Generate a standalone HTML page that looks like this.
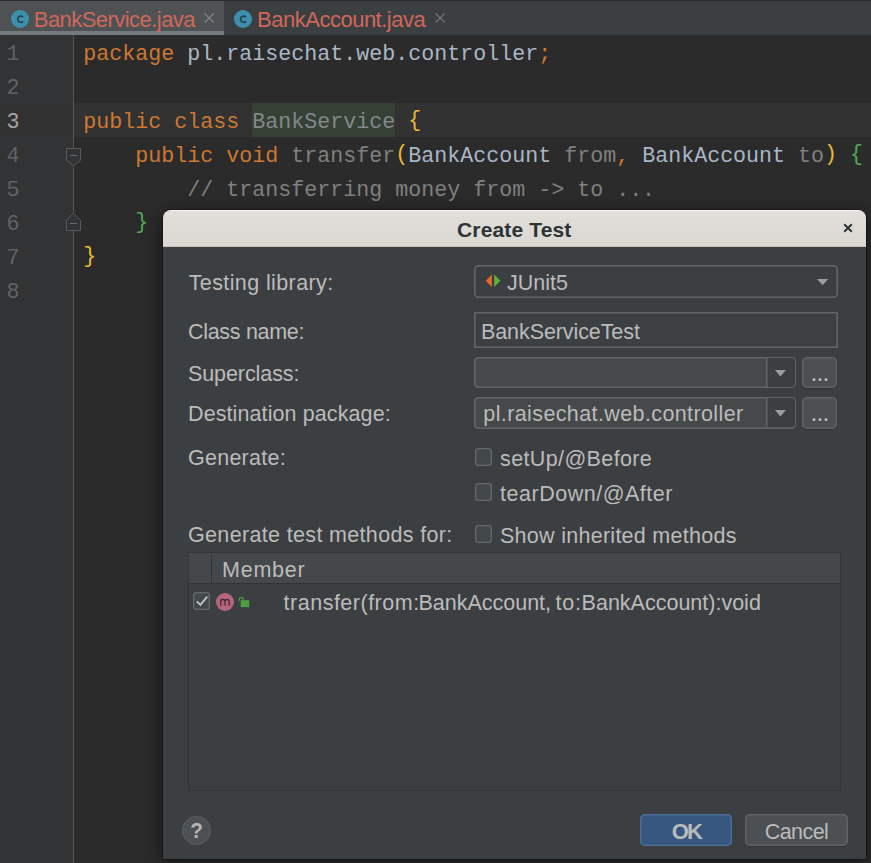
<!DOCTYPE html>
<html>
<head>
<meta charset="utf-8">
<title>Create Test</title>
<style>
*{box-sizing:border-box;margin:0;padding:0}
html,body{width:871px;height:863px;overflow:hidden;background:#2b2b2b}
body{position:relative;font-family:"Liberation Sans",sans-serif;color:#bbbbbb}
.abs{position:absolute}
/* ---------- tab bar ---------- */
#tabbar{left:0;top:0;width:871px;height:35px;background:#3c3f41;border-top:1px solid #2b2b2b}
#tab1{left:0;top:1px;width:224px;height:30px;background:#4e5254}
#tab1u{left:0;top:31px;width:224px;height:4px;background:#747a80}
.tabtxt{top:7px;font-size:22px;line-height:26px;color:#d1675a;white-space:pre}
.tabx{font-size:0}
/* ---------- editor ---------- */
#gutter{left:0;top:35px;width:73px;height:828px;background:#313335}
#gutline{left:73px;top:35px;width:1px;height:828px;background:#555555}
#curline{left:74px;top:103px;width:797px;height:34px;background:#323232}
.ln{left:6.500px;width:30px;height:34px;line-height:34px;font-family:"Liberation Mono",monospace;font-size:21.67px;color:#606366;white-space:pre}
.code{left:83.300px;height:34px;line-height:34px;font-family:"Liberation Mono",monospace;font-size:21.67px;color:#a9b7c6;white-space:pre}
.k{color:#cc7832}.g{color:#808080}.y{color:#e8ba36;position:relative;top:-2.300px}.gr{color:#54a857;position:relative;top:-2.300px}.u{color:#83878b}
#hl{left:252px;top:103px;width:143.300px;height:34px;background:#344134}
/* ---------- dialog ---------- */
#shadow{left:163px;top:210px;width:703px;height:649px;border-radius:8px 8px 0 0;box-shadow:0 4px 18px 1px rgba(0,0,0,.5),0 0 0 1px rgba(0,0,0,.32)}
#dlg{left:163px;top:210px;width:703px;height:649px;background:#3c3f41;border-radius:8px 8px 0 0;overflow:hidden}
#title{left:0;top:0;width:703px;height:37px;background:linear-gradient(#e2dfdb,#dbd7d3);border-top:1px solid #f6f5f4;border-bottom:1px solid #c4c0bb}
#title span{position:absolute;top:6.600px;left:294px;font-weight:bold;font-size:21px;letter-spacing:0.15px;line-height:24px;color:#2e3436;white-space:pre}
.lbl{margin-top:1px;font-size:21.5px;line-height:26px;white-space:pre;color:#bbbbbb}
.combo{box-shadow:inset 0 0 0 1.6px #626567;border-radius:4.5px;background:#3c3f41}
.field{box-shadow:inset 0 0 0 1.6px #626567;background:#3d4042}
.btn{border-radius:5px;background:#4c5052;box-shadow:inset 0 0 0 1.5px #606365,0 1px 0.5px rgba(0,0,0,.22)}
.cb{width:17.5px;height:18px;box-shadow:inset 0 0 0 1.3px #666869;border-radius:3.5px;background:#43494a}
</style>
</head>
<body>
<!-- tab bar -->
<div id="tabbar" class="abs"></div>
<div id="tab1" class="abs"></div>
<div id="tab1u" class="abs"></div>
<svg class="abs" style="left:11px;top:10.100px" width="18" height="18" viewBox="0 0 18 18"><circle cx="9" cy="9" r="9" fill="#3d8fae"/><path d="M12 7.100A3.100 3.100 0 1 0 12 11.300" fill="none" stroke="#26424f" stroke-width="1.700"/></svg>
<span class="abs tabtxt" style="left:33.800px;letter-spacing:-0.55px">BankService.java</span>
<svg class="abs" style="left:204px;top:13px" width="10" height="10" viewBox="0 0 10 10"><path d="M0.500 0.400L9.700 9.600M9.700 0.400L0.500 9.600" stroke="#868b8e" stroke-width="1.100" fill="none"/></svg>
<svg class="abs" style="left:234.100px;top:10.100px" width="18" height="18" viewBox="0 0 18 18"><circle cx="9" cy="9" r="9" fill="#3d8fae"/><path d="M12 7.100A3.100 3.100 0 1 0 12 11.300" fill="none" stroke="#26424f" stroke-width="1.700"/></svg>
<span class="abs tabtxt" style="left:257.100px;letter-spacing:-0.5px">BankAccount.java</span>
<svg class="abs" style="left:435px;top:13px" width="10" height="10" viewBox="0 0 10 10"><path d="M0.500 0.400L9.700 9.600M9.700 0.400L0.500 9.600" stroke="#747a7d" stroke-width="1.100" fill="none"/></svg>

<!-- editor -->
<div id="gutter" class="abs"></div>
<div id="gutline" class="abs"></div>
<div id="curline" class="abs"></div>
<div class="abs" style="left:0;top:103px;width:73px;height:34px;background:#323232"></div>
<div id="hl" class="abs"></div>
<span class="abs ln" style="top:38px">1</span>
<span class="abs ln" style="top:72px">2</span>
<span class="abs ln" style="top:106px;color:#a4a3a3">3</span>
<span class="abs ln" style="top:140px">4</span>
<span class="abs ln" style="top:174px">5</span>
<span class="abs ln" style="top:208px">6</span>
<span class="abs ln" style="top:242px">7</span>
<span class="abs ln" style="top:276px">8</span>

<span class="abs code" style="top:38px"><span class="k">package</span> pl.raisechat.web.controller<span class="k">;</span></span>
<span class="abs code" style="top:106px"><span class="k">public class</span> <span class="u">BankService</span> <span class="y">{</span></span>
<span class="abs code" style="top:140px">    <span class="k">public void</span> <span class="g">transfer</span><span class="y">(</span>BankAccount <span class="g">from</span><span class="k">,</span> BankAccount <span class="g">to</span><span class="y">)</span> <span class="gr">{</span></span>
<span class="abs code" style="top:174px">        <span class="g">// transferring money from -&gt; to ...</span></span>
<span class="abs code" style="top:208px">    <span class="gr">}</span></span>
<span class="abs code" style="top:242px"><span class="y">}</span></span>

<!-- fold markers -->
<svg class="abs" style="left:64px;top:145px" width="18" height="150" viewBox="0 0 18 150">
<path d="M9.500 20.700V68.300M9.500 85.500V150" stroke="#555555" stroke-width="1" fill="none"/>
<path d="M2.500 3.500H16.500V15.300L9.500 20.700L2.500 15.300Z" fill="#313335" stroke="#5a5a5a" stroke-width="1"/>
<path d="M6 10.500H13" stroke="#6a6a6a" stroke-width="1"/>
<path d="M2.500 85.500H16.500V75.300L9.500 68.300L2.500 75.300Z" fill="#313335" stroke="#5a5a5a" stroke-width="1"/>
<path d="M6 78.500H13" stroke="#6a6a6a" stroke-width="1"/>
</svg>

<!-- dialog -->
<div id="shadow" class="abs"></div>
<div id="dlg" class="abs">
  <div id="title" class="abs"><span>Create Test</span></div>
  <svg class="abs" style="left:680px;top:13px" width="10" height="10" viewBox="0 0 10 10"><path d="M1.200 1.200L8.800 8.800M8.800 1.200L1.200 8.800" stroke="#2e3436" stroke-width="2" fill="none"/></svg>

  <span class="abs lbl" style="left:25.700px;top:59px;letter-spacing:0.39px">Testing library:</span>
  <span class="abs lbl" style="left:25px;top:108px;letter-spacing:-0.3px">Class name:</span>
  <span class="abs lbl" style="left:25px;top:150px;letter-spacing:-0.09px">Superclass:</span>
  <span class="abs lbl" style="left:25px;top:190px;letter-spacing:0.1px">Destination package:</span>
  <span class="abs lbl" style="left:25px;top:234px;letter-spacing:0.25px">Generate:</span>
  <span class="abs lbl" style="left:25px;top:311px;letter-spacing:0.34px">Generate test methods for:</span>

  <!-- JUnit5 combo -->
  <div class="abs combo" style="left:311.300px;top:55.200px;width:363.400px;height:32.500px"></div>
  <svg class="abs" style="left:322px;top:64px" width="16" height="14" viewBox="0 0 16 14"><path d="M6.800 0.500V12.900L0.900 6.700Z" fill="#e8672b"/><path d="M9.200 0.500V12.900L15.400 6.700Z" fill="#5fb03c"/></svg>
  <span class="abs lbl" style="left:344px;top:59px">JUnit5</span>
  <svg class="abs" style="left:653.800px;top:68.800px" width="12" height="7" viewBox="0 0 12 7"><path d="M0 0H11.200L5.600 6.300Z" fill="#9a9da0"/></svg>

  <!-- class name -->
  <div class="abs field" style="left:311.300px;top:102.300px;width:363.400px;height:36px"></div>
  <span class="abs lbl" style="left:318px;top:108px;letter-spacing:-0.09px">BankServiceTest</span>

  <!-- superclass -->
  <div class="abs combo" style="left:311.300px;top:146.700px;width:322px;height:31.600px;background:#45494a"></div>
  <div class="abs" style="left:602.800px;top:148.300px;width:28.900px;height:28.600px;background:#3c3f41;box-shadow:inset 1.5px 0 0 0 #626567;border-radius:0 3px 3px 0"></div>
  <svg class="abs" style="left:612.100px;top:159.700px" width="12" height="7" viewBox="0 0 12 7"><path d="M0 0H10.800L5.400 6.400Z" fill="#9a9da0"/></svg>
  <div class="abs btn" style="left:639.300px;top:146.700px;width:35px;height:31.600px"></div>
  <svg class="abs" style="left:649px;top:167px" width="18" height="5" viewBox="0 0 18 5"><circle cx="2" cy="2.500" r="1.500" fill="#bbbbbb"/><circle cx="8" cy="2.500" r="1.500" fill="#bbbbbb"/><circle cx="14" cy="2.500" r="1.500" fill="#bbbbbb"/></svg>

  <!-- destination -->
  <div class="abs combo" style="left:311.300px;top:186.500px;width:322px;height:32px;background:#45494a"></div>
  <div class="abs" style="left:602.800px;top:188.100px;width:28.900px;height:29px;background:#3c3f41;box-shadow:inset 1.5px 0 0 0 #626567;border-radius:0 3px 3px 0"></div>
  <svg class="abs" style="left:612.100px;top:199.700px" width="12" height="7" viewBox="0 0 12 7"><path d="M0 0H10.800L5.400 6.400Z" fill="#9a9da0"/></svg>
  <div class="abs btn" style="left:639.300px;top:186.500px;width:35px;height:32px"></div>
  <svg class="abs" style="left:649px;top:207px" width="18" height="5" viewBox="0 0 18 5"><circle cx="2" cy="2.500" r="1.500" fill="#bbbbbb"/><circle cx="8" cy="2.500" r="1.500" fill="#bbbbbb"/><circle cx="14" cy="2.500" r="1.500" fill="#bbbbbb"/></svg>
  <span class="abs lbl" style="left:320.300px;top:190px;letter-spacing:0.39px">pl.raisechat.web.controller</span>

  <!-- checkboxes -->
  <div class="abs cb" style="left:311.600px;top:238px"></div>
  <span class="abs lbl" style="left:337px;top:235px;letter-spacing:0.375px">setUp/@Before</span>
  <div class="abs cb" style="left:311.600px;top:273.400px"></div>
  <span class="abs lbl" style="left:337px;top:270px;letter-spacing:0.52px">tearDown/@After</span>
  <div class="abs cb" style="left:311.600px;top:315px"></div>
  <span class="abs lbl" style="left:337px;top:312px;letter-spacing:0.276px">Show inherited methods</span>

  <!-- table -->
  <div class="abs" style="left:25px;top:342px;width:653px;height:239px;border:1px solid #333537;background:#3c3f41"></div>
  <div class="abs" style="left:26px;top:343px;width:651px;height:31px;background:#44484a;border-bottom:1px solid #313436"></div>
  <div class="abs" style="left:48px;top:345px;width:1px;height:28px;background:#313436"></div>
  <span class="abs lbl" style="left:59px;top:346px;letter-spacing:0.76px">Member</span>
  <div class="abs cb" style="left:29.700px;top:382.200px"></div>
  <svg class="abs" style="left:29.500px;top:382px" width="18" height="18" viewBox="0 0 18 18"><path d="M3.800 9.300L7.400 12.900L14.200 4.600" stroke="#c4c4c4" stroke-width="1.800" fill="none"/></svg>
  <svg class="abs" style="left:53px;top:383px" width="18" height="18" viewBox="0 0 18 18"><circle cx="9" cy="9" r="9" fill="#b5657c"/><path d="M4.800 12.800V6.200M4.800 8.600C4.800 5.800 9 5.800 9 8.600V12.800M9 8.600C9 5.800 13.200 5.800 13.200 8.600V12.800" stroke="#4f2a36" stroke-width="1.350" fill="none"/></svg>
  <svg class="abs" style="left:75px;top:386px" width="13" height="12" viewBox="0 0 13 12"><path d="M1.200 5V3.600A2 2 0 0 1 5.200 3.600V5" stroke="#4e9f3d" stroke-width="1.200" fill="none"/><rect x="2.700" y="4.200" width="8.500" height="6.900" fill="#4e9f3d"/></svg>
  <span class="abs lbl" style="left:120.600px;top:379px;letter-spacing:0.5px">transfer(from:</span><span class="abs lbl" style="left:255.400px;top:379px">BankAccount,</span><span class="abs lbl" style="left:392.600px;top:379px;letter-spacing:0.8px">to:</span><span class="abs lbl" style="left:418.600px;top:379px">BankAccount):void</span>

  <!-- bottom buttons -->
  <div class="abs" style="left:19px;top:606px;width:29px;height:29px;border-radius:50%;background:#4c5052;border:1px solid #5e6060"></div>
  <span class="abs" style="left:18.600px;top:607.500px;width:29px;text-align:center;font-size:22.500px;line-height:26px;font-weight:bold;color:#b4b6b8;transform:scaleX(.92)">?</span>
  <div class="abs" style="left:477.400px;top:604.400px;width:91.400px;height:31.500px;box-shadow:inset 0 0 0 1.4px #4a6f92;border-radius:5px;background:#365880"></div>
  <span class="abs lbl" style="left:477.500px;top:608px;width:92px;text-align:center;font-weight:bold;font-size:22px;letter-spacing:-1.8px">OK</span>
  <div class="abs btn" style="left:582.300px;top:604.400px;width:102.400px;height:31.500px"></div>
  <span class="abs lbl" style="left:582px;top:608px;width:103px;text-align:center;letter-spacing:-0.54px">Cancel</span>
</div>
</body>
</html>
